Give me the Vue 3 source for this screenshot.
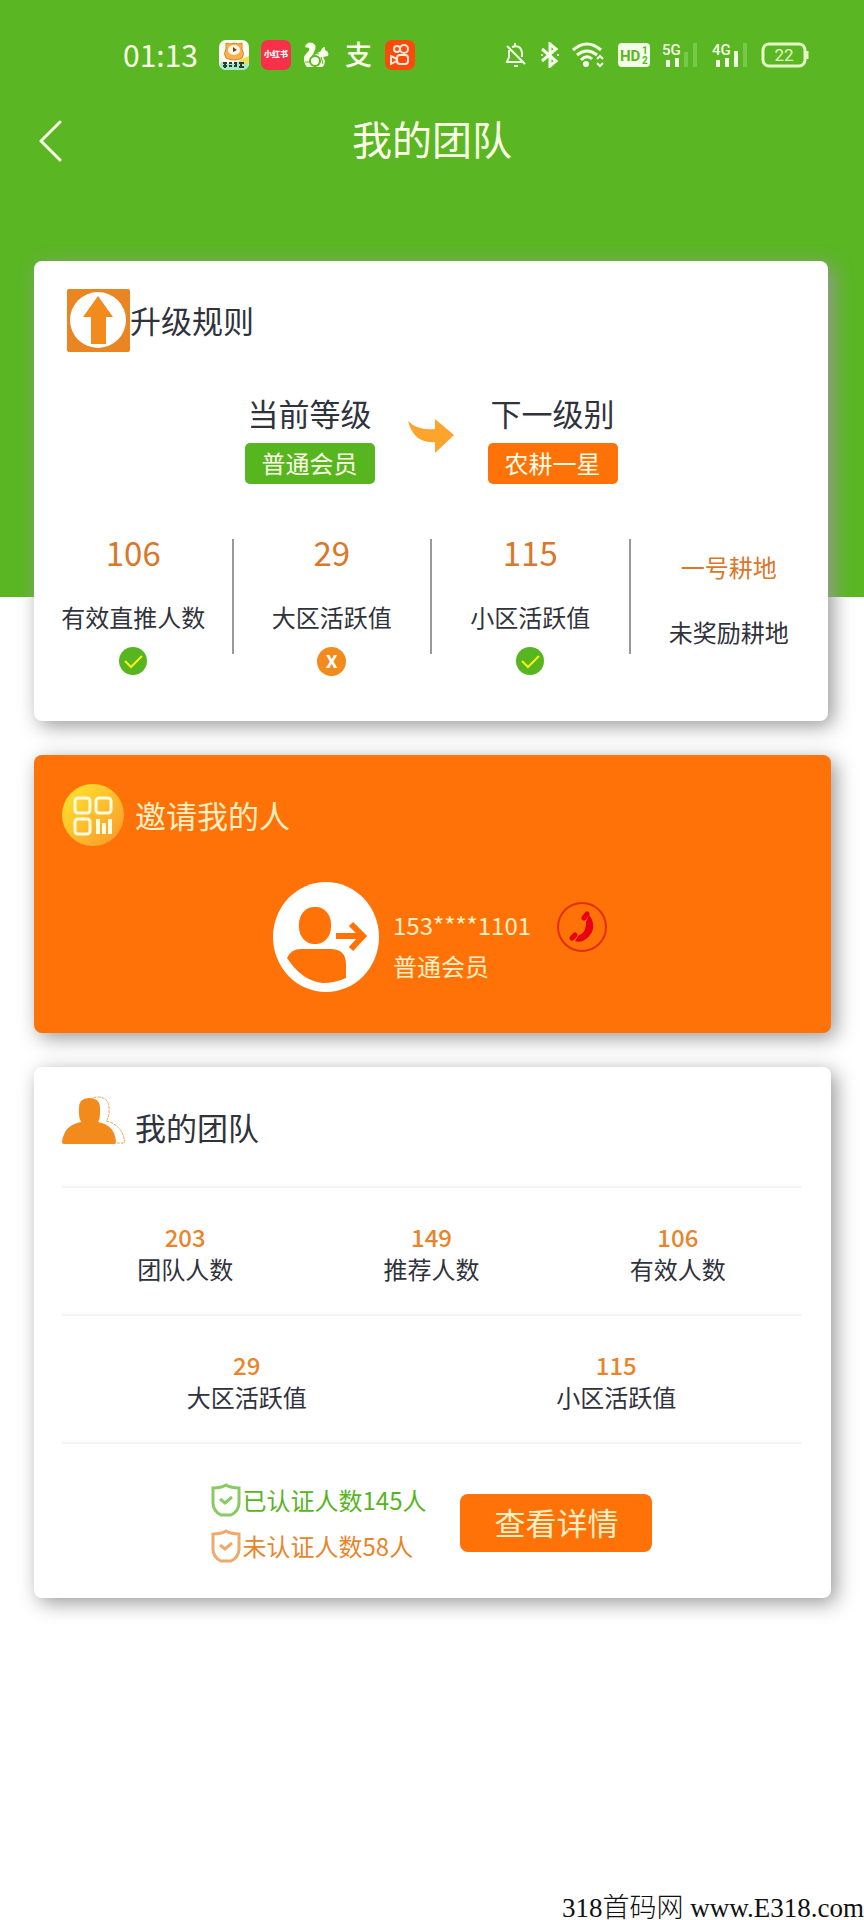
<script setup>
const requirements = [
  { value: '106', label: '有效直推人数', state: 'ok' },
  { value: '29', label: '大区活跃值', state: 'no' },
  { value: '115', label: '小区活跃值', state: 'ok' },
  { value: '一号耕地', label: '未奖励耕地', state: '' },
]
const teamRows = [
  [
    { value: 203, label: '团队人数' },
    { value: 149, label: '推荐人数' },
    { value: 106, label: '有效人数' },
  ],
  [
    { value: 29, label: '大区活跃值' },
    { value: 115, label: '小区活跃值' },
  ],
]
const verified = [
  { text: '已认证人数145人', kind: 'yes' },
  { text: '未认证人数58人', kind: 'pending' },
]
</script>

<template>
  <div class="page">
    <header class="hero">
      <div class="status">
        <div class="status-left">
          <time class="clock">01:13</time>
          <svg class="app" viewBox="0 0 30 30" aria-hidden="true">
            <rect width="30" height="30" rx="7" fill="#fffdf3" />
            <path d="M2 22Q10 25 18 22T30 17V23Q30 30 23 30H8Q2 30 1 24Z" fill="#a8e8cc" />
            <path d="M20 20L30 16V22L24 25Z" fill="#f4dc58" />
            <path d="M7 3L11 4Q15 2 19 4L23 3V9Q26 14 23 18Q15 22 7 18Q4 14 7 9Z" fill="#f9b04a" stroke="#d9842a" stroke-width="1" />
            <ellipse cx="15" cy="10" rx="6" ry="5" fill="#fff8e8" />
            <path d="M14 7L18 10L14 12Z" fill="#7c3b16" />
            <path d="M4 23H8M4 26H8M6 22V28M10 23H13M10 26H13M15 23H18M15 26H18M17 23V27M20 23H25M20 27H25M22 23V27" stroke="#24432f" stroke-width="2" />
          </svg>
          <span class="app red">小红书</span>
          <svg class="squirrel" viewBox="0 0 27 27" aria-hidden="true">
            <path d="M2 5C3 0 9 -1 12 3C14 7 10 10 10 14L14 11L18 9C18 7 20 5 22 5L22 8C25 9 26 12 25 14L20 15C23 18 22 24 19 25H4C1 22 0 16 2 13C4 10 7 9 6 6Z" fill="#fbffe8" />
            <circle cx="12" cy="19" r="5" fill="none" stroke="#5ab623" stroke-width="2" />
            <path d="M9 14C10 12 13 11 16 12M18 15L20 22M2 20H7" fill="none" stroke="#5ab623" stroke-width="1" />
          </svg>
          <span class="pay">支</span>
          <svg class="app" viewBox="0 0 30 30" aria-hidden="true">
            <rect width="30" height="30" rx="7" fill="#fb4a0c" />
            <g fill="none" stroke="#ffe9d8" stroke-width="2">
              <circle cx="12" cy="9" r="3" />
              <circle cx="19" cy="9" r="4" />
              <rect x="12" y="15" width="11" height="9" rx="3" />
              <path d="M12 19L6 16V24L12 21Z" />
            </g>
          </svg>
        </div>
        <div class="status-right">
          <svg width="24" height="26" viewBox="0 0 22 26" aria-hidden="true">
            <path d="M10 1V4M7 5Q16 2 17 11V15M4 8V15L2 20H17M2 4L20 22M9 24H13" fill="none" stroke="#f4ffe8" stroke-width="2" />
          </svg>
          <svg width="20" height="26" viewBox="0 0 20 26" aria-hidden="true">
            <path d="M2 7L16 19L10 24V2L16 7L2 19" fill="none" stroke="#f4ffe8" stroke-width="3" />
            <circle cx="2" cy="13" r="1" fill="#f4ffe8" />
            <circle cx="18" cy="13" r="1" fill="#f4ffe8" />
          </svg>
          <svg width="34" height="26" viewBox="0 0 34 26" aria-hidden="true">
            <path d="M1 8Q15 -4 29 8M5 13Q15 5 25 13M9 18Q15 12 20 17" fill="none" stroke="#f4ffe8" stroke-width="3" />
            <circle cx="14" cy="22" r="3" fill="#f4ffe8" />
            <path d="M25 17L28 14L31 17M25 21L28 24L31 21" fill="none" stroke="#f4ffe8" stroke-width="2" />
          </svg>
          <svg width="32" height="26" viewBox="0 0 32 26" aria-label="HD 1 2">
            <rect y="1" width="32" height="24" rx="4" fill="#f4ffe8" />
            <text x="2" y="19" class="hd">HD</text>
            <text x="24" y="12" class="hd-small">1</text>
            <text x="24" y="22" class="hd-small">2</text>
          </svg>
          <svg width="38" height="26" viewBox="0 0 38 26">
            <text x="0" y="13" class="net">5G</text>
            <path d="M6 18V25M15 16V25" stroke="#f4ffe8" stroke-width="4" />
            <path d="M24 10V25M33 1V25" stroke="#78c84a" stroke-width="4" />
          </svg>
          <svg width="37" height="26" viewBox="0 0 37 26">
            <text x="0" y="13" class="net">4G</text>
            <path d="M6 18V25M15 16V25M24 9V25" stroke="#f4ffe8" stroke-width="4" />
            <path d="M33 1V25" stroke="#78c84a" stroke-width="4" />
          </svg>
          <svg width="48" height="26" viewBox="0 0 48 26">
            <rect x="2" y="2" width="42" height="22" rx="6" fill="none" stroke="#e6f8c8" stroke-width="3" />
            <path d="M46 9V17" stroke="#e6f8c8" stroke-width="3" />
            <text x="23" y="19" class="battery">22</text>
          </svg>
        </div>
      </div>
      <nav class="nav">
        <button class="back" type="button" aria-label="返回">
          <svg width="28" height="44" viewBox="0 0 28 44">
            <path d="M23 4L4 23L23 42" fill="none" stroke="#fbffe8" stroke-width="3" stroke-linecap="round" stroke-linejoin="round" />
          </svg>
        </button>
        <h1>我的团队</h1>
      </nav>
    </header>

    <main class="cards">
      <section class="card rules">
        <h2 class="heading tight">
          <svg width="63" height="63" viewBox="0 0 63 63" aria-hidden="true">
            <rect width="63" height="63" rx="2" fill="#ea8524" />
            <circle cx="31" cy="31" r="28" fill="#fff" />
            <path d="M31 7L46 28H39V55H24V28H16Z" fill="#f28a1c" />
          </svg>
          <span>升级规则</span>
        </h2>
        <div class="levels">
          <div class="level">
            <span class="level-name">当前等级</span>
            <span class="tag green">普通会员</span>
          </div>
          <svg class="arrow" width="47" height="35" viewBox="0 0 47 35" aria-hidden="true">
            <path d="M0 2Q10 12 27 10V0L46 16L27 34V23Q6 25 0 2Z" fill="#fda42c" />
          </svg>
          <div class="level">
            <span class="level-name">下一级别</span>
            <span class="tag orange">农耕一星</span>
          </div>
        </div>
        <ul class="reqs">
          <li v-for="r in requirements" :key="r.label" :class="{ plain: !r.state }">
            <span class="req-value">{{ r.value }}</span>
            <span class="req-label">{{ r.label }}</span>
            <svg v-if="r.state === 'ok'" width="29" height="29" viewBox="0 0 29 29" aria-label="已达标">
              <circle cx="14" cy="14" r="14" fill="#57b51f" />
              <path d="M6 14L12 20L23 9" fill="none" stroke="#f6f41a" stroke-width="2" />
            </svg>
            <span v-if="r.state === 'no'" class="cross">X</span>
          </li>
        </ul>
      </section>

      <section class="card inviter">
        <h2 class="heading">
          <svg width="63" height="63" viewBox="0 0 63 63" aria-hidden="true">
            <defs>
              <linearGradient id="coin" x1="0" y1="0" x2="1" y2="1">
                <stop offset="0.1" stop-color="#ffe02c" />
                <stop offset="0.9" stop-color="#fb9d2c" />
              </linearGradient>
            </defs>
            <circle cx="31" cy="31" r="31" fill="url(#coin)" />
            <g fill="none" stroke="#fffbe0" stroke-width="3">
              <rect x="13" y="14" width="15" height="15" rx="3" />
              <rect x="34" y="14" width="15" height="15" rx="3" />
              <rect x="13" y="35" width="15" height="15" rx="3" />
              <path d="M36 35V50M42 39V50M48 35V50" stroke-width="4" />
            </g>
          </svg>
          <span>邀请我的人</span>
        </h2>
        <div class="contact">
          <svg width="106" height="111" viewBox="0 0 106 111" aria-hidden="true">
            <ellipse cx="53" cy="55" rx="53" ry="55" fill="#fff" />
            <rect x="26" y="25" width="32" height="37" rx="15" ry="17" fill="#ff7208" />
            <path d="M14 76Q18 67 28 67H57Q73 67 73 82V96Q62 101 50 101Q29 99 14 76Z" fill="#ff7208" />
            <path d="M63 54H88M78 42L90 54L78 67" fill="none" stroke="#ff7208" stroke-width="6" />
          </svg>
          <div class="contact-text">
            <span>153****1101</span>
            <span>普通会员</span>
          </div>
          <button class="call" type="button" aria-label="拨打电话">
            <svg width="50" height="50" viewBox="0 0 50 50">
              <circle cx="25" cy="25" r="24" fill="none" stroke="#e2300c" stroke-width="2" />
              <path d="M32 13C37 19 38 27 33 33C29 38 24 41 18 39L22 33C27 32 29 27 29 20Z" fill="#e60012" />
              <path d="M27 16L30 12M15 36L18 33" stroke="#e60012" stroke-width="5" stroke-linecap="round" />
            </svg>
          </button>
        </div>
      </section>

      <section class="card team">
        <h2 class="heading">
          <svg width="63" height="63" viewBox="0 0 63 63" aria-hidden="true">
            <path d="M27 8Q28 1 37 1Q47 2 47 12V18Q46 23 44 25Q61 29 63 47H50" fill="#fff" stroke="#e8a45c" stroke-width="1" stroke-dasharray="3 1" />
            <path d="M17 12Q17 2 27 2Q38 2 38 12V18Q38 23 36 26Q53 29 54 46Q54 48 52 48H2Q0 48 0 46Q2 29 19 26Q17 22 17 18Z" fill="#f28a1c" />
          </svg>
          <span>我的团队</span>
        </h2>
        <dl v-for="(row, i) in teamRows" :key="i" class="team-row">
          <div v-for="c in row" :key="c.label">
            <dd>{{ c.value }}</dd>
            <dt>{{ c.label }}</dt>
          </div>
        </dl>
        <div class="team-foot">
          <ul class="verify">
            <li v-for="v in verified" :key="v.kind" :class="v.kind">
              <svg width="30" height="34" viewBox="0 0 30 34" aria-hidden="true">
                <path d="M15 2Q20 5 28 5V20Q28 28 20 32H10Q2 28 2 20V5Q10 5 15 2Z" fill="none" stroke="currentColor" stroke-width="3" opacity="0.7" />
                <path d="M9 16L14 20L21 14" fill="none" stroke="currentColor" stroke-width="3" opacity="0.7" />
              </svg>
              <span>{{ v.text }}</span>
            </li>
          </ul>
          <button class="detail" type="button">查看详情</button>
        </div>
      </section>
    </main>

    <footer class="mark">318首码网 www.E318.com</footer>
  </div>
</template>

<style>
body {
  background: #fff;
}
</style>

<style scoped>
.page {
  min-height: 100vh;
  display: flex;
  flex-direction: column;
  font-family: "Noto Sans CJK SC", "Noto Sans", sans-serif;
  font-weight: 400;
  color: #30323c;
}
h1,
h2,
ul,
dl,
dd,
dt {
  margin: 0;
  padding: 0;
  list-style: none;
  font-weight: inherit;
}
svg {
  display: block;
  flex: none;
}
button {
  border: 0;
  padding: 0;
  background: none;
  font: inherit;
  color: inherit;
}
.hero {
  background: #5ab623;
  color: #fbffe8;
  padding: 20px 0 407px;
}
.status {
  display: flex;
  justify-content: space-between;
  height: 70px;
  padding: 0 55px 0 123px;
}
.status-left,
.status-right {
  display: flex;
  align-items: center;
  gap: 12px;
}
.clock {
  font-size: 30px;
  line-height: 40px;
  padding-bottom: 2px;
  margin-right: 9px;
}
.app {
  width: 30px;
  height: 30px;
}
.squirrel {
  width: 27px;
  height: 27px;
}
.red {
  border-radius: 7px;
  background: #f8304a;
  color: #fff;
  font-size: 8px;
  font-weight: 900;
  line-height: 28px;
  text-align: center;
}
.pay {
  padding: 0 1px 2px 3px;
  font-size: 27px;
  font-weight: 500;
  line-height: 30px;
}
.hd {
  font: 700 15px Roboto, sans-serif;
  fill: #5ab623;
}
.hd-small {
  font: 700 10px Roboto, sans-serif;
  fill: #5ab623;
}
.net {
  font: 500 15px Roboto, sans-serif;
  fill: #f4ffe8;
}
.battery {
  font: 400 17px Roboto, sans-serif;
  fill: #e6f8c8;
  text-anchor: middle;
}
.nav {
  display: grid;
  grid-template-columns: 70px 1fr 70px;
  align-items: center;
  height: 100px;
}
.back {
  justify-self: end;
  margin-right: 5px;
}
h1 {
  padding-bottom: 4px;
  font-size: 40px;
  line-height: 60px;
  text-align: center;
}
.cards {
  display: flex;
  flex-direction: column;
  gap: 34px;
  margin-top: -336px;
  padding: 0 33px 0 34px;
}
.card {
  border-radius: 8px;
  background: #fff;
  box-shadow: 5px 5px 20px #999;
}
.heading {
  display: flex;
  align-items: center;
  gap: 10px;
  font-size: 31px;
  line-height: 61px;
}
.heading span {
  padding-bottom: 2px;
}
.tight {
  gap: 0;
}
.rules {
  margin-right: 3px;
  padding: 28px 0 45px;
}
.rules .heading {
  padding-left: 33px;
}
.levels {
  display: flex;
  justify-content: center;
  align-items: center;
  gap: 33px;
  margin-top: 40px;
}
.arrow {
  margin-bottom: 4px;
}
.level {
  display: flex;
  flex-direction: column;
  align-items: center;
  gap: 9px;
}
.level-name {
  font-size: 31px;
  line-height: 42px;
}
.tag {
  padding: 0 17px 2px;
  border-radius: 5px;
  font-size: 24px;
  line-height: 39px;
  color: #fbffe8;
}
.green {
  background: #57b51f;
}
.orange {
  background: #ff7208;
}
.reqs {
  display: grid;
  grid-template-columns: repeat(4, 1fr);
  margin-top: 48px;
}
.reqs li {
  position: relative;
  display: flex;
  flex-direction: column;
  align-items: center;
}
.reqs li + li::before {
  content: "";
  position: absolute;
  left: -1px;
  top: 7px;
  width: 2px;
  height: 115px;
  background: #999;
}
.req-value {
  font-size: 33px;
  line-height: 40px;
  color: #d9782a;
}
.req-label {
  margin: 27px 0 12px;
  font-size: 24px;
  line-height: 36px;
}
.plain {
  padding-top: 15px;
}
.plain .req-value {
  font-size: 24px;
}
.cross {
  width: 29px;
  border-radius: 50%;
  background: #f28a1c;
  color: #fff;
  font: 700 18px/29px Roboto, sans-serif;
  text-align: center;
}
.inviter {
  padding: 29px 28px 40px;
  background: #ff7208;
  color: #ffefc4;
}
.contact {
  display: flex;
  align-items: center;
  margin: 35px 0 0 211px;
}
.contact-text {
  display: flex;
  flex-direction: column;
  margin: 15px 26px 0 14px;
  font-size: 24px;
  line-height: 41px;
}
.call {
  margin: 0 0 21px;
}
.team {
  padding: 29px 30px 29px 28px;
}
.team .heading {
  padding-bottom: 27px;
}
.team-row {
  display: flex;
  border-top: 2px solid #f3f3f3;
  padding: 33px 0 29px;
  text-align: center;
  font-size: 24px;
  line-height: 32px;
}
.team-row > div {
  flex: 1;
  display: flex;
  flex-direction: column;
}
.team-row dd {
  font-weight: 500;
  color: #e8852a;
}
.team-foot {
  display: flex;
  align-items: center;
  justify-content: center;
  gap: 34px;
  border-top: 2px solid #f3f3f3;
  padding-top: 33px;
}
.verify {
  display: flex;
  flex-direction: column;
}
.verify li {
  display: flex;
  align-items: center;
  gap: 2px;
  font-size: 24px;
  line-height: 46px;
}
.yes {
  color: #57b51f;
}
.pending {
  color: #e8852a;
}
.detail {
  width: 192px;
  height: 58px;
  padding-bottom: 2px;
  border-radius: 8px;
  background: #ff7208;
  color: #ffefc4;
  font-size: 31px;
  line-height: 56px;
}
.mark {
  margin-top: auto;
  text-align: right;
  font-family: "Liberation Serif", "Noto Sans CJK SC", serif;
  font-size: 27px;
  font-weight: 300;
  line-height: 24px;
  color: #111;
}
</style>
